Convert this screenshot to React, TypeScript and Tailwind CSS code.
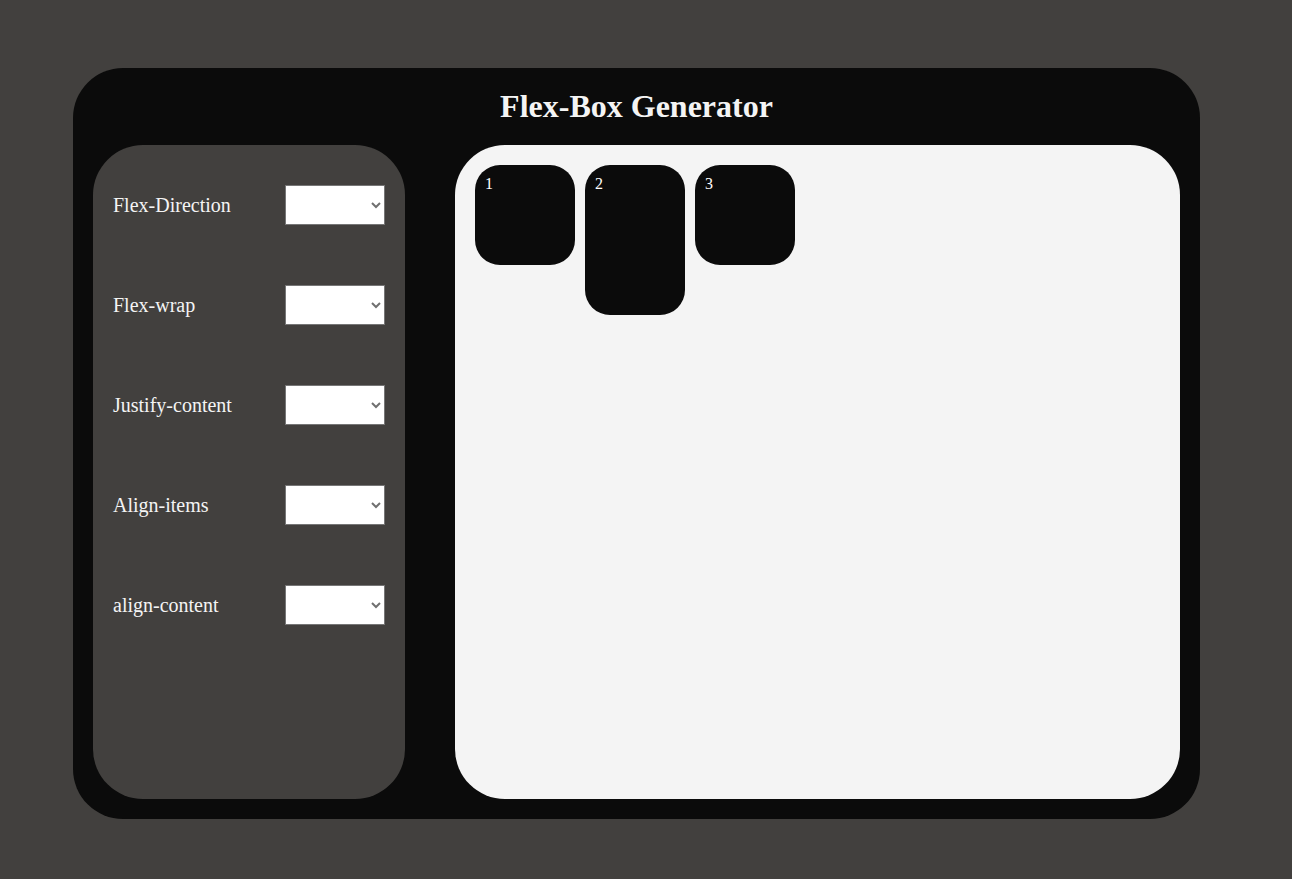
const controls = ['Flex-Direction', 'Flex-wrap', 'Justify-content', 'Align-items', 'align-content'];

const boxes = [
  { n: 1, h: 'h-[100px]' },
  { n: 2, h: 'h-[150px]' },
  { n: 3, h: 'h-[100px]' },
];

export default function App() {
  return (
    <div className="min-h-[879px] bg-[#42403e] pt-[68px] font-['Liberation_Serif',serif]">
      <div className="mx-[73px] w-[1127px] h-[751px] rounded-[50px] bg-[#0b0b0b] px-5 pt-5 flex flex-col">
        {/* Header */}
        <h1 className="text-[32px] font-bold text-[#f4f4f4] text-center leading-[37px] mb-5">Flex-Box Generator</h1>

        <div className="flex gap-[50px] h-[654px]">
          {/* Controls */}
          <div className="w-[312px] rounded-[50px] bg-[#42403e] px-5 pt-[10px]">
            {controls.map((label) => (
              <div key={label} className="h-[100px] flex items-center justify-between">
                <label className="text-[20px] text-[#f4f4f4]">{label}</label>
                <select className="w-[100px] h-[40px] bg-white border border-[#767676] text-[#707070] text-[11px]">
                  <option value=""></option>
                </select>
              </div>
            ))}
          </div>

          {/* Preview */}
          <div className="flex-1 rounded-[50px] bg-[#f4f4f4] p-[10px] flex items-start">
            {boxes.map((b) => (
              <div key={b.n} className={`w-[100px] ${b.h} m-[10px] mr-0 rounded-[25px] bg-[#0b0b0b] p-[10px] text-base text-white leading-[18px]`}>
                {b.n}
              </div>
            ))}
          </div>
        </div>
      </div>
    </div>
  );
}
